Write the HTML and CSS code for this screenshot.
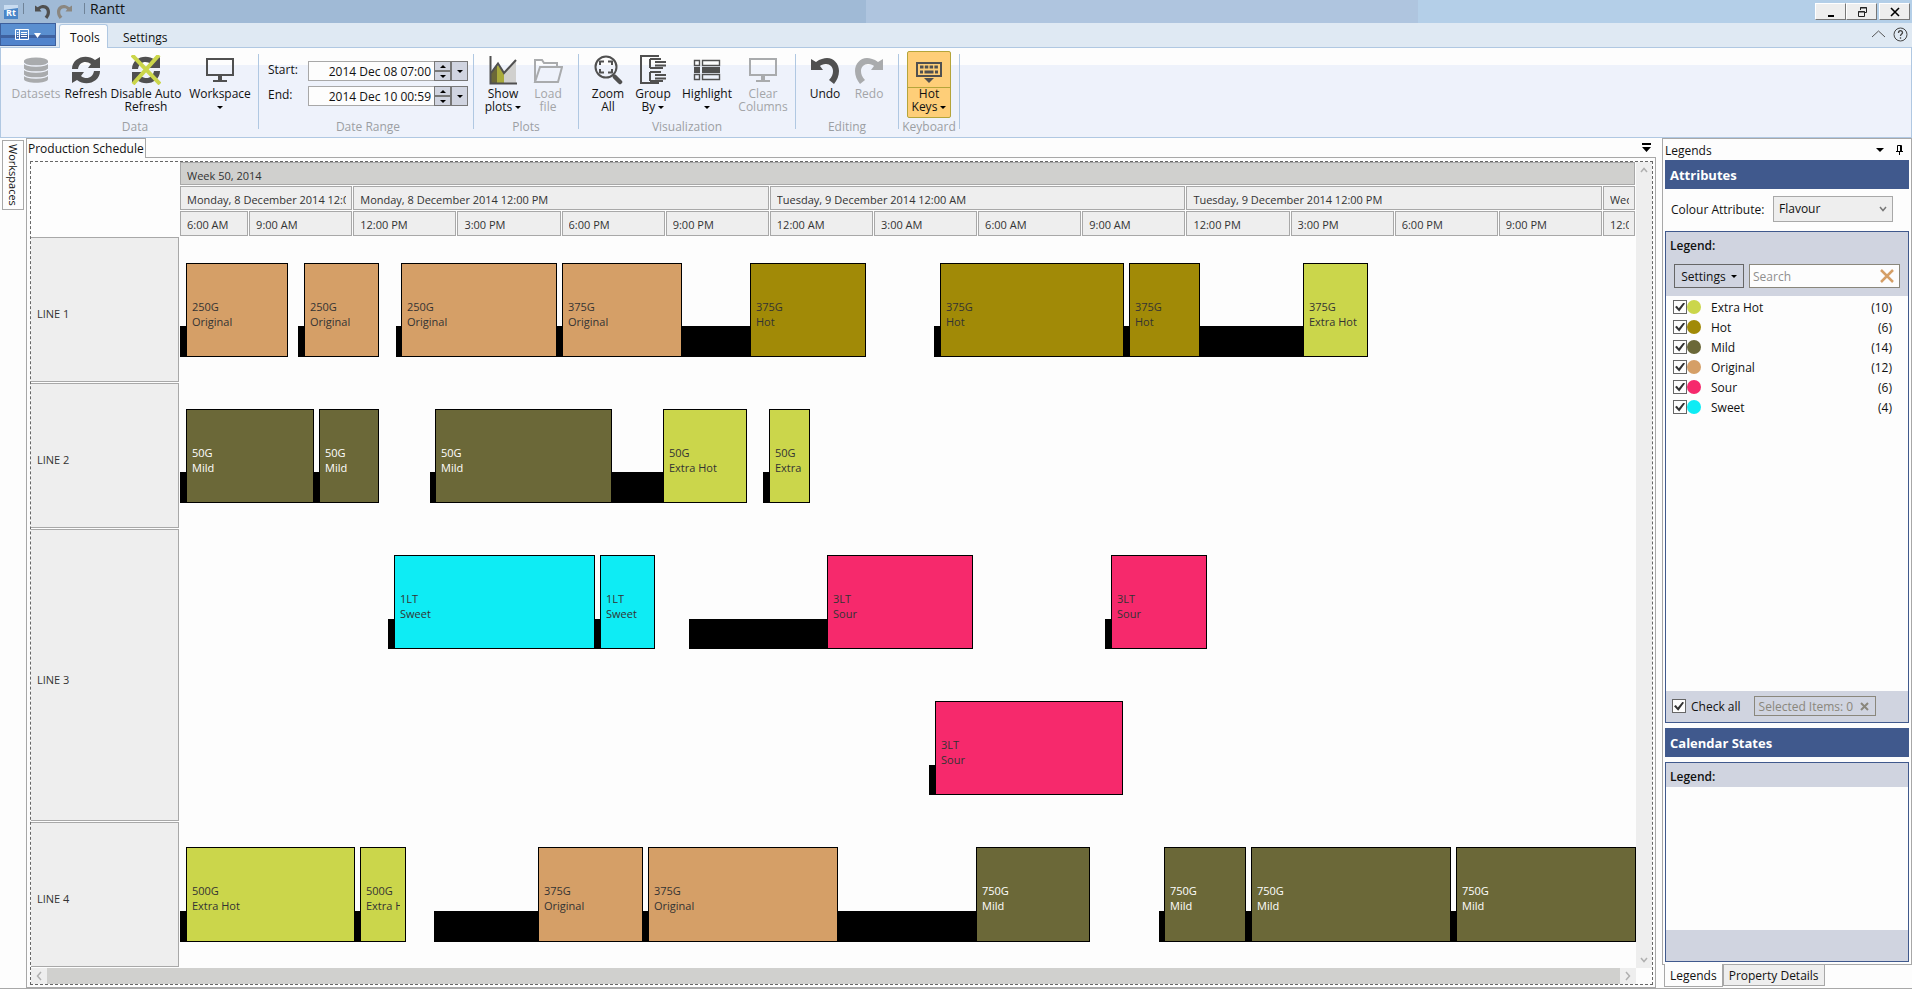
FILE: index.html
```html
<!DOCTYPE html>
<html lang="en">
<head>
<meta charset="utf-8">
<title>Rantt</title>
<link rel="stylesheet" href="styles.css">
</head>
<body>
<div class="app">
  <header class="titlebar">
    <div class="quick">
      <svg class="logo" width="14" height="14" viewBox="0 0 14 14"><rect width="14" height="14" fill="#4a86c8"/><path d="M0 0H14V3L0 5Z" fill="#c9dcf0"/><text x="2" y="11" class="logo-text">Rt</text></svg>
      <i class="quick-sep"></i>
      <button class="quick-btn" aria-label="Undo"><svg width="15" height="14" viewBox="0 0 28 26"><use href="#i-undo"/></svg></button>
      <button class="quick-btn faded" aria-label="Redo"><svg width="15" height="14" viewBox="0 0 28 26"><use href="#i-redo"/></svg></button>
      <i class="quick-sep last"></i>
      <h1>Rantt</h1>
    </div>
    <div class="window-buttons">
      <button aria-label="Minimize"><svg width="12" height="12" viewBox="0 0 12 12"><path d="M3 10H9" stroke="#000" stroke-width="2"/></svg></button>
      <button aria-label="Restore"><svg width="12" height="12" viewBox="0 0 12 12" fill="none" stroke="#222"><path d="M4.500 4V1.500H10.500V6.500H8.500M4 2H11"/><path d="M2.500 5.500H8.500V10.500H2.500ZM2 6H9"/></svg></button>
      <button class="close" aria-label="Close"><svg width="12" height="12" viewBox="0 0 12 12"><path d="M2 2L10 10M10 2L2 10" stroke="#000" stroke-width="1.600"/></svg></button>
    </div>
  </header>

  <nav class="tabs">
    <button class="file-tab" aria-label="File"><svg width="26" height="12" viewBox="0 0 26 12"><path d="M.5 .5H13.500V10.500H.5ZM4.500 1V10M6 3.500H12M6 5.500H12M6 7.500H12M2 3.500H3.500M2 5.500H3.500M2 7.500H3.500" fill="none" stroke="#fff"/><path d="M19 4H26L22.500 9Z" fill="#fff"/></svg></button>
    <button class="tab active">Tools</button>
    <button class="tab">Settings</button>
    <span class="tabs-end">
      <button aria-label="Collapse ribbon"><svg width="15" height="8" viewBox="0 0 15 8"><path d="M1 7L7.500 1L14 7" fill="none" stroke="#555"/></svg></button>
      <button aria-label="Help"><svg width="15" height="15" viewBox="0 0 15 15" fill="none" stroke="#444"><circle cx="7.500" cy="7.500" r="6.500"/><path d="M5.500 6C5.500 3 9.500 3 9.500 5.700C9.500 7 7.500 7 7.500 9M7.500 10.200V11.700" stroke-width="1.300"/></svg></button>
    </span>
  </nav>

  <section class="ribbon">
    <div class="group g-data">
      <div class="tools">
        <button class="tool w50" disabled><svg width="28" height="30" viewBox="0 0 28 30"><path d="M2 6V24C2 29 26 29 26 24V6Z" fill="#a9abad"/><ellipse cx="14" cy="6" rx="12" ry="3.500" fill="#a9abad"/><path d="M2 8C4 12 24 12 26 8M2 14C4 18 24 18 26 14M2 20C4 24 24 24 26 20" fill="none" stroke="#eef2fb" stroke-width="1.500"/></svg><span>Datasets</span></button>
        <button class="tool w50"><svg width="30" height="30" viewBox="0 0 30 30"><use href="#i-refresh"/></svg><span>Refresh</span></button>
        <button class="tool w70"><svg width="30" height="30" viewBox="0 0 30 30"><use href="#i-refresh"/><path d="M1 0L29 29M28 0L2 29" stroke="#cbd64b" stroke-width="4"/></svg><span>Disable Auto<br>Refresh</span></button>
        <button class="tool w78"><svg width="30" height="30" viewBox="0 0 30 30"><use href="#i-monitor"/></svg><span>Workspace<br><i class="caret"></i></span></button>
      </div>
      <div class="caption">Data</div>
    </div>
    <div class="group g-range">
      <div class="range">
        <label for="start">Start:</label>
        <span class="date"><input id="start" value="2014 Dec 08 07:00"><span class="spin"><button aria-label="Start up"><i class="caret up"></i></button><button aria-label="Start down"><i class="caret"></i></button></span><button class="drop" aria-label="Start calendar"><i class="caret"></i></button></span>
        <label for="end">End:</label>
        <span class="date"><input id="end" value="2014 Dec 10 00:59"><span class="spin"><button aria-label="End up"><i class="caret up"></i></button><button aria-label="End down"><i class="caret"></i></button></span><button class="drop" aria-label="End calendar"><i class="caret"></i></button></span>
      </div>
      <div class="caption">Date Range</div>
    </div>
    <div class="group">
      <div class="tools">
        <button class="tool w44"><svg width="28" height="30" viewBox="0 0 28 30"><path d="M2 18L8 9V28H2Z" fill="#6b6838"/><path d="M8 9L15 18V28H8Z" fill="#a9ab3c"/><path d="M15 18L27 6V28H15Z" fill="#d0d0ce"/><path d="M1.500 1V28.500H28" fill="none" stroke="#505050" stroke-width="2"/><path d="M2 18L9 8.500L15 18L27 5" fill="none" stroke="#505050" stroke-width="2"/></svg><span>Show<br>plots <i class="caret"></i></span></button>
        <button class="tool w46" disabled><svg width="30" height="30" viewBox="0 0 30 30" fill="none" stroke="#a9abad" stroke-width="2"><path d="M2 27V5H9L11 8H24V12M2 27L7 12H29L25 27Z"/></svg><span>Load<br>file</span></button>
      </div>
      <div class="caption">Plots</div>
    </div>
    <div class="group">
      <div class="tools">
        <button class="tool w44"><svg width="30" height="30" viewBox="0 0 30 30" fill="none" stroke="#505050"><circle cx="13" cy="12" r="10.500" stroke-width="2"/><path d="M7 10V6.500H11M15 6.500H19V10M19 14V17.500H15M11 17.500H7V14" stroke-width="2"/><path d="M20 20L22.500 22.500" stroke-width="2"/><path d="M22 22L27 27" stroke-width="4.500" stroke-linecap="round"/></svg><span>Zoom<br>All</span></button>
        <button class="tool w46"><svg width="30" height="30" viewBox="0 0 30 30" fill="none" stroke="#505050" stroke-width="2"><path d="M21 1H3V28H21"/><path d="M12 4V13M12 17V26M12 4H23M17 7H28M17 10.500H28M12 13H25M12 17H23M17 20H28M17 23.500H28M12 26H25"/></svg><span>Group<br>By <i class="caret"></i></span></button>
        <button class="tool w62"><svg width="28" height="30" viewBox="0 0 28 30" fill="none" stroke="#505050" stroke-width="1.400"><path d="M1.500 5.500H6.500V10.500H1.500ZM9.500 5.500H26.500V10.500H9.500ZM1.500 19.500H6.500V24.500H1.500ZM9.500 19.500H26.500V24.500H9.500Z"/><path d="M1 12H7V18H1ZM9 12H27V18H9Z" fill="#505050" stroke="none"/></svg><span>Highlight<br><i class="caret"></i></span></button>
        <button class="tool w50" disabled><svg class="dim" width="30" height="30" viewBox="0 0 30 30"><use href="#i-monitor"/></svg><span>Clear<br>Columns</span></button>
      </div>
      <div class="caption">Visualization</div>
    </div>
    <div class="group">
      <div class="tools">
        <button class="tool w44"><svg width="28" height="30" viewBox="0 -3 28 30"><use href="#i-undo"/></svg><span>Undo</span></button>
        <button class="tool w44" disabled><svg class="dim" width="28" height="30" viewBox="0 -3 28 30"><use href="#i-redo"/></svg><span>Redo</span></button>
      </div>
      <div class="caption">Editing</div>
    </div>
    <div class="group g-keys">
      <div class="tools">
        <button class="tool w44 pressed"><svg width="28" height="30" viewBox="0 0 28 30"><rect x="2" y="8" width="24" height="13" fill="none" stroke="#505050" stroke-width="2"/><path d="M5 12H23" stroke="#505050" stroke-width="3" stroke-dasharray="3.500 1.300"/><path d="M5 17H8M9.500 17H18.500M20 17H23" stroke="#505050" stroke-width="3"/><path d="M9 23H19L14 28Z" fill="#505050"/></svg><span>Hot<br>Keys <i class="caret"></i></span></button>
      </div>
      <div class="caption">Keyboard</div>
    </div>
  </section>

  <main class="work">
    <aside class="side-strip"><button>Workspaces</button></aside>

    <section class="doc">
      <div class="doc-tabs"><button class="doc-tab">Production Schedule</button><button class="doc-menu" aria-label="Document list"><svg width="9" height="9" viewBox="0 0 9 9"><path d="M0 0H9V2H0ZM0 4H9L4.500 9Z"/></svg></button></div>
      <div class="doc-body">
        <div class="frame">
          <div class="chart">
            <div class="corner"></div>
            <div class="scale">
              <div class="scale-row week"><span>Week 50, 2014</span></div>
              <div class="scale-row halves"><span>Monday, 8 December 2014 12:00 AM</span><span>Monday, 8 December 2014 12:00 PM</span><span>Tuesday, 9 December 2014 12:00 AM</span><span>Tuesday, 9 December 2014 12:00 PM</span><span>Wednesday</span></div>
              <div class="scale-row hours"><span>6:00 AM</span><span>9:00 AM</span><span>12:00 PM</span><span>3:00 PM</span><span>6:00 PM</span><span>9:00 PM</span><span>12:00 AM</span><span>3:00 AM</span><span>6:00 AM</span><span>9:00 AM</span><span>12:00 PM</span><span>3:00 PM</span><span>6:00 PM</span><span>9:00 PM</span><span>12:00 AM</span></div>
            </div>
            <div class="line">LINE 1</div>
            <div class="lane">
              <i style="--s:0;--e:6"></i><i style="--s:118;--e:124"></i><i style="--s:216;--e:221"></i><i style="--s:377;--e:382"></i><i style="--s:502;--e:570"></i><i style="--s:754;--e:760"></i><i style="--s:944;--e:949"></i><i style="--s:1020;--e:1123"></i>
              <div class="job original" style="--s:6;--e:108">250G<br>Original</div>
              <div class="job original" style="--s:124;--e:199">250G<br>Original</div>
              <div class="job original" style="--s:221;--e:377">250G<br>Original</div>
              <div class="job original" style="--s:382;--e:502">375G<br>Original</div>
              <div class="job hot" style="--s:570;--e:686">375G<br>Hot</div>
              <div class="job hot" style="--s:760;--e:944">375G<br>Hot</div>
              <div class="job hot" style="--s:949;--e:1020">375G<br>Hot</div>
              <div class="job extra" style="--s:1123;--e:1188">375G<br>Extra Hot</div>
            </div>
            <div class="line">LINE 2</div>
            <div class="lane">
              <i style="--s:0;--e:6"></i><i style="--s:134;--e:139"></i><i style="--s:250;--e:255"></i><i style="--s:432;--e:483"></i><i style="--s:583;--e:589"></i>
              <div class="job mild" style="--s:6;--e:134">50G<br>Mild</div>
              <div class="job mild" style="--s:139;--e:199">50G<br>Mild</div>
              <div class="job mild" style="--s:255;--e:432">50G<br>Mild</div>
              <div class="job extra" style="--s:483;--e:567">50G<br>Extra Hot</div>
              <div class="job extra" style="--s:589;--e:630">50G<br>Extra Hot</div>
            </div>
            <div class="line double">LINE 3</div>
            <div class="lane">
              <i style="--s:208;--e:214"></i><i style="--s:415;--e:420"></i><i style="--s:509;--e:647"></i><i style="--s:925;--e:931"></i>
              <div class="job sweet" style="--s:214;--e:415">1LT<br>Sweet</div>
              <div class="job sweet" style="--s:420;--e:475">1LT<br>Sweet</div>
              <div class="job sour" style="--s:647;--e:793">3LT<br>Sour</div>
              <div class="job sour" style="--s:931;--e:1027">3LT<br>Sour</div>
            </div>
            <div class="lane">
              <i style="--s:749;--e:755"></i>
              <div class="job sour" style="--s:755;--e:943">3LT<br>Sour</div>
            </div>
            <div class="line">LINE 4</div>
            <div class="lane">
              <i style="--s:0;--e:6"></i><i style="--s:175;--e:180"></i><i style="--s:254;--e:358"></i><i style="--s:463;--e:468"></i><i style="--s:658;--e:796"></i><i style="--s:979;--e:984"></i><i style="--s:1066;--e:1071"></i><i style="--s:1271;--e:1276"></i>
              <div class="job extra" style="--s:6;--e:175">500G<br>Extra Hot</div>
              <div class="job extra" style="--s:180;--e:226">500G<br>Extra Hot</div>
              <div class="job original" style="--s:358;--e:463">375G<br>Original</div>
              <div class="job original" style="--s:468;--e:658">375G<br>Original</div>
              <div class="job mild" style="--s:796;--e:910">750G<br>Mild</div>
              <div class="job mild" style="--s:984;--e:1066">750G<br>Mild</div>
              <div class="job mild" style="--s:1071;--e:1271">750G<br>Mild</div>
              <div class="job mild" style="--s:1276;--e:1456">750G<br>Mild</div>
            </div>
          </div>
          <div class="vbar"><svg width="8" height="6" viewBox="0 0 8 6"><path d="M1 5L4 1.500L7 5" /></svg><svg width="8" height="6" viewBox="0 0 8 6"><path d="M1 1L4 4.500L7 1"/></svg></div>
          <div class="hbar"><svg width="6" height="10" viewBox="0 0 6 10"><path d="M5 1L1.500 5L5 9"/></svg><b></b><svg width="6" height="10" viewBox="0 0 6 10"><path d="M1 1L4.500 5L1 9"/></svg></div>
        </div>
      </div>
    </section>

    <aside class="legends">
      <div class="panel">
        <div class="panel-title"><span>Legends</span><button aria-label="Panel menu"><i class="caret big"></i></button><button aria-label="Pin"><svg width="7" height="10" viewBox="0 0 7 10"><path d="M1.500 6V.5H5.500V6M0 6.500H7M4.500 1V6M3.500 7V10" fill="none" stroke="#000"/></svg></button></div>
        <h2>Attributes</h2>
        <div class="attribute"><label for="colour">Colour Attribute:</label><span class="select"><select id="colour"><option>Flavour</option></select><svg width="8" height="6" viewBox="0 0 8 6"><path d="M1 1L4 4.500L7 1" fill="none" stroke="#777" stroke-width="1.500"/></svg></span></div>
        <div class="box main-box">
          <div class="box-head"><h3>Legend:</h3>
            <div class="filters"><button class="settings">Settings <i class="caret"></i></button><span class="search"><input placeholder="Search" aria-label="Search"><button aria-label="Clear search"><svg width="14" height="14" viewBox="0 0 14 14"><path d="M1 1L13 13M13 1L1 13" stroke="#d59f67" stroke-width="2.500"/></svg></button></span></div>
          </div>
          <ul class="items">
            <li><label><input type="checkbox" checked><i class="dot extra"></i>Extra Hot</label><span>(10)</span></li>
            <li><label><input type="checkbox" checked><i class="dot hot"></i>Hot</label><span>(6)</span></li>
            <li><label><input type="checkbox" checked><i class="dot mild"></i>Mild</label><span>(14)</span></li>
            <li><label><input type="checkbox" checked><i class="dot original"></i>Original</label><span>(12)</span></li>
            <li><label><input type="checkbox" checked><i class="dot sour"></i>Sour</label><span>(6)</span></li>
            <li><label><input type="checkbox" checked><i class="dot sweet"></i>Sweet</label><span>(4)</span></li>
          </ul>
          <div class="box-foot"><label><input type="checkbox" checked>Check all</label><button class="selected" disabled>Selected Items: 0<svg width="9" height="9" viewBox="0 0 9 9"><path d="M1 1L8 8M8 1L1 8" stroke="#8a877c" stroke-width="2"/></svg></button></div>
        </div>
        <h2>Calendar States</h2>
        <div class="box states-box">
          <div class="box-head"><h3>Legend:</h3></div>
          <div class="blank"></div>
          <div class="box-foot"></div>
        </div>
      </div>
      <div class="panel-tabs"><button class="on">Legends</button><button>Property Details</button></div>
    </aside>
  </main>
</div>
<svg width="0" height="0" class="defs">
  <defs>
    <path id="i-undo" d="M5 4C9 1 13 0 16 0C23 0 28 6 28 13C28 18 26 22 23 26L18 22C21 19 22 16 22 13C22 9 19 6 15 6C12 6 10 7 9 8L12 12H0V1Z" fill="currentColor"/>
    <path id="i-redo" d="M23 4C19 1 15 0 12 0C5 0 0 6 0 13C0 18 2 22 5 26L10 22C7 19 6 16 6 13C6 9 9 6 13 6C16 6 18 7 19 8L16 12H28V1Z" fill="currentColor"/>
    <g id="i-refresh" fill="currentColor"><path d="M1 14C1 3 15 -2 24 5L29 2V13H17L20 9C15 5 8 7 7 14Z"/><path d="M29 16C29 27 15 32 6 25L1 28V17H13L10 21C15 25 22 23 23 16Z"/></g>
    <g id="i-monitor"><path d="M2 4H28V20H2Z" fill="none" stroke="currentColor" stroke-width="2"/><path d="M13 21H17V25H22V27H8V25H13Z" fill="currentColor"/></g>
  </defs>
</svg>
</body>
</html>
```
FILE: styles.css
```css
* { box-sizing: border-box; }
body { margin: 0; font: 12px/15px "Open Sans", "Noto Sans", sans-serif; color: #111; background: #fdfdfd; }
button, input, select { font: inherit; color: inherit; margin: 0; padding: 0; border: 0; background: none; border-radius: 0; }
h1, h2, h3, ul { margin: 0; padding: 0; font: inherit; }
svg { display: block; flex: none; }
.defs { position: absolute; }
.app { display: flex; flex-direction: column; height: 100vh; border-bottom: 1px solid #a8a8a8; }

.caret { display: inline-block; width: 0; height: 0; border: 3px solid transparent; border-top: 3px solid #000; border-bottom: 0; vertical-align: middle; }
.caret.up { border-top: 0; border-bottom: 3px solid #000; }
.caret.big { border-width: 4px 4px 0; }

/* Title bar */
.titlebar { display: flex; justify-content: space-between; height: 23px; background: linear-gradient(90deg, #a0bad6 0 866px, #afc5df 866px 1418px, #b4cfe8 1418px); }
.quick { display: flex; align-items: center; padding-left: 4px; }
.logo-text { font: bold 9px "Open Sans", sans-serif; fill: #fff; }
.quick-sep { width: 1px; height: 11px; margin: 0 11px 6px 5px; background: #6f8398; }
.quick-sep.last { margin: 0 5px 6px 12px; }
.quick-btn { color: #505050; margin-right: 7px; }
.quick-btn.faded { color: #8b8780; margin-right: 0; }
h1 { font-size: 14px; line-height: 18px; padding-bottom: 5px; }
.window-buttons { display: flex; padding: 3px 2px 0 0; }
.window-buttons button { display: grid; place-items: center; width: 31px; height: 17px; background: #eee; border: 1px solid; border-color: #fff #777 #777 #fff; }
.window-buttons .close { margin-left: 2px; }

/* Ribbon tabs */
.tabs { display: flex; align-items: flex-end; height: 25px; background: #dfe9f3; border-bottom: 1px solid #b0c8e2; }
.file-tab { display: grid; place-items: center; width: 56px; height: 23px; margin-bottom: 1px; background: linear-gradient(#5a8fd0 0 50%, #3f62a0 50% 65%, #5083cc 65%); border: 1px solid #3d5f9c; }
.tab { height: 22px; padding: 2px 10px 0; margin-left: 5px; }
.tab.active { width: 49px; height: 24px; margin: 0 0 -1px 3px; background: #fdfdfd; border: 1px solid #b0c8e2; border-bottom: 0; border-radius: 3px 3px 0 0; }
.tabs-end { display: flex; align-items: center; gap: 7px; height: 24px; margin-left: auto; padding: 0 4px 2px 0; }

/* Ribbon */
.ribbon { display: flex; height: 90px; padding: 3px 0 0; background: linear-gradient(#fdfdfd 0 17px, #eef2fb 17px); border: 1px solid #b0c8e2; border-top: 0; }
.group { position: relative; display: flex; flex-direction: column; justify-content: space-between; height: 84px; padding: 0 8px 0 7px; }
.group::after { content: ""; position: absolute; right: 0; top: 3px; width: 1px; height: 75px; background: #b0c8e2; }
.g-data { padding: 0 0 0 10px; }
.g-range { padding: 0 6px 0 9px; }
.g-keys { padding: 0 9px 0 8px; }
.tools { display: flex; }
.tool { display: flex; flex-direction: column; align-items: center; justify-content: flex-start; gap: 2px; height: 66px; padding-top: 3px; line-height: 13px; text-align: center; white-space: nowrap; color: #111; border: 1px solid transparent; }
.tool svg { height: 30px; color: #505050; }
.tool:disabled { color: #a3a5a8; }
.tool svg.dim { color: #a9abad; }
.tool.pressed { height: 67px; background: linear-gradient(#fece78 0 35px, #b5a53a 35px 36px, #fece78 36px); border-color: #b5a53a; border-radius: 2px; }
.w44 { width: 44px; } .w46 { width: 46px; } .w50 { width: 50px; } .w62 { width: 62px; } .w70 { width: 70px; } .w78 { width: 78px; }
.caption { color: #9c9fa3; text-align: center; line-height: 16px; margin: 0 -8px; }
.range { display: grid; grid-template-columns: 34px 160px; column-gap: 6px; row-gap: 5px; padding-top: 10px; }
.range label { line-height: 17px; }
.date { display: flex; height: 20px; }
.date input { flex: 1; min-width: 0; text-align: right; padding-right: 3px; background: #fdfdfd; border: 1px solid #a8a8a8; border-right: 0; }
.spin { display: flex; flex-direction: column; width: 17px; }
.date button { display: grid; place-items: center; background: #d0d4e0; border: 1px solid #777; }
.spin button { flex: 1; min-height: 0; }
.date .drop { width: 17px; }

/* Work area */
.work { display: flex; flex: 1; min-height: 0; }
.side-strip { width: 26px; padding: 2px 0 0 2px; }
.side-strip button { width: 22px; height: 70px; font-size: 11px; writing-mode: vertical-rl; border: 1px solid #a8a8a8; }
.doc { display: flex; flex-direction: column; flex: 1; min-width: 0; }
.doc-tabs { display: flex; height: 20px; }
.doc-tab { padding: 0 1px; white-space: nowrap; border: 1px solid #a8a8a8; border-bottom: 0; }
.doc-menu { display: flex; flex: 1; justify-content: flex-end; align-items: center; padding-right: 5px; border-bottom: 1px solid #a8a8a8; }
.doc-body { flex: 1; min-height: 0; padding: 3px 2px 2px 3px; border: 1px solid #a8a8a8; border-top: 0; }
.frame { display: grid; grid-template: minmax(0, 1fr) 16px / minmax(0, 1fr) 16px; height: 100%; border: 1px dashed #666; }
.chart { display: grid; grid-template: 75px repeat(5, minmax(0, 1fr)) / 149px minmax(0, 1fr); font-size: 11px; color: #333; }
.scale { display: grid; grid-template-rows: 24px 25px 26px; }
.scale-row { display: grid; padding-bottom: 1px; }
.halves { grid-template-columns: minmax(0, 173fr) repeat(3, minmax(0, 416fr)) minmax(0, 33fr); }
.hours { grid-template-columns: minmax(0, 69fr) repeat(13, minmax(0, 104fr)) minmax(0, 33fr); }
.scale-row span { margin-right: 1px; padding: 5px 5px 0 6px; background: #eee; border: 1px solid #a8a8a8; white-space: nowrap; overflow: clip; overflow-clip-margin: content-box; }
.week span { background: #d0d0ce; }
.line { display: flex; align-items: center; margin: 0 1px 1px 0; padding: 8px 0 0 6px; background: #eee; border: 1px solid #a8a8a8; border-left: 0; }
.double { grid-row: span 2; }
.lane { position: relative; }
.lane > * { position: absolute; left: calc(var(--s) / 1456 * 100%); width: calc((var(--e) - var(--s)) / 1456 * 100%); }
.lane > i { top: 61%; bottom: 18%; background: #000; }
.job { top: 17.5%; bottom: 18%; display: flow-root; padding: 35px 5px 0; border: 1px solid #000; white-space: nowrap; overflow: clip; overflow-clip-margin: content-box; }
.original { background: #d59f67; }
.hot { background: #a18a07; }
.mild { background: #6b6838; }
.job.mild { color: #fff; }
.extra { background: #cbd64b; }
.sweet { background: #0eecf4; }
.sour { background: #f6296c; }
.vbar { display: flex; flex-direction: column; justify-content: space-between; align-items: center; padding: 5px 0; background: #eee; }
.vbar path, .hbar path { fill: none; stroke: #b0b0b0; stroke-width: 1.5; }
.hbar { display: flex; align-items: center; gap: 5px; padding: 0 5px; background: #eee; }
.hbar b { flex: 1; align-self: stretch; background: #d0d0ce; }

/* Legends */
.legends { display: flex; flex-direction: column; width: 250px; margin-left: 6px; }
.panel { flex: 1; min-height: 0; display: flex; flex-direction: column; padding: 0 2px 2px; border: 1px solid #a8a8a8; }
.panel-title { display: flex; align-items: center; gap: 12px; height: 21px; padding-right: 6px; }
.panel-title span { flex: 1; padding-top: 2px; }
.panel-title .caret { display: block; }
h2 { height: 29px; flex: none; padding-left: 5px; font-size: 13px; font-weight: 700; line-height: 30px; color: #fff; background: #40598d; }
.attribute { display: flex; align-items: center; justify-content: space-between; flex: none; height: 42px; padding: 0 16px 3px 6px; }
.attribute label { padding-top: 2px; }
.select { display: grid; align-items: center; width: 120px; height: 26px; background: #eee; border: 1px solid #a8a8a8; }
.select > * { grid-area: 1 / 1; }
.select select { height: 22px; appearance: none; padding: 0 5px; }
.select svg { justify-self: end; margin-right: 5px; pointer-events: none; }
.box { display: flex; flex-direction: column; border: 1px solid #40598d; }
.main-box { flex: 494; margin-bottom: 5px; }
.states-box { flex: 200; margin-top: 5px; }
.box-head { padding: 4px 8px 0 4px; background: #d0d4e0; }
h3 { font-weight: 600; line-height: 19px; }
.filters { display: flex; gap: 5px; padding: 9px 0 8px 4px; }
.settings { width: 70px; height: 24px; border: 1px solid #666; }
.settings .caret { margin-left: 2px; vertical-align: 3px; }
.search { display: flex; align-items: center; flex: 1; min-width: 0; height: 24px; padding: 0 5px 0 3px; background: #fdfdfd; border: 1px solid #8a877c; }
.search input { flex: 1; min-width: 0; outline: 0; }
.search input::placeholder { color: #8f8f8f; }
.items { flex: 1; padding-top: 1px; list-style: none; }
.items li { display: flex; align-items: center; justify-content: space-between; height: 20px; padding: 0 16px 0 7px; }
.items label, .box-foot label { display: flex; align-items: center; }
.dot { width: 14px; height: 14px; margin-right: 10px; border-radius: 50%; }
input[type=checkbox] { appearance: none; display: grid; place-items: center; width: 14px; height: 14px; background: #fdfdfd; border: 1px solid #666; }
input[type=checkbox]:checked::before { content: ""; width: 10px; height: 9px; background: #333; clip-path: polygon(0 50%, 18% 35%, 38% 65%, 85% 0, 100% 12%, 42% 100%); }
.box-foot { display: flex; align-items: center; gap: 13px; height: 31px; padding-left: 6px; background: #d0d4e0; }
.box-foot input { margin-right: 5px; }
.selected { display: flex; align-items: center; justify-content: space-between; width: 122px; height: 20px; padding: 0 6px 0 4px; color: #8a877c; white-space: nowrap; border: 1px solid #8a877c; }
.states-box .box-head { padding-bottom: 1px; }
.blank { flex: 1; }
.panel-tabs { display: flex; align-items: flex-start; height: 23px; padding-left: 2px; }
.panel-tabs button { height: 21px; padding: 0 5px; background: #eee; border: 1px solid #a8a8a8; border-top: 0; white-space: nowrap; }
.panel-tabs .on { height: 23px; margin-top: -1px; background: #fdfdfd; }
```
